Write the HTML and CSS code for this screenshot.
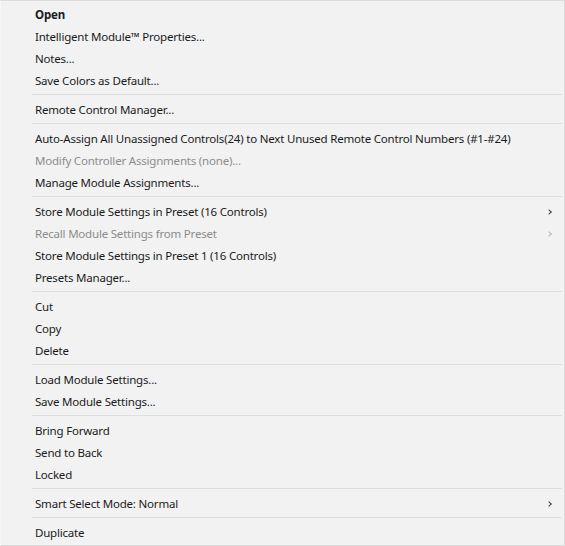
FILE: index.html
```html
<!DOCTYPE html>
<html lang="en">
<head>
    <meta charset="UTF-8">
    <title>Module Menu</title>
    <link rel="stylesheet" href="styles.css">
</head>
<body>
    <div class="menu">
        <div class="menu-item bold">Open</div>
        <div class="menu-item">Intelligent Module™ Properties...</div>
        <div class="menu-item">Notes...</div>
        <div class="menu-item">Save Colors as Default...</div>
        <div class="separator"></div>
        <div class="menu-item">Remote Control Manager...</div>
        <div class="separator"></div>
        <div class="menu-item">Auto-Assign All Unassigned Controls(24) to Next Unused Remote Control Numbers (#1-#24)</div>
        <div class="menu-item disabled">Modify Controller Assignments (none)...</div>
        <div class="menu-item">Manage Module Assignments...</div>
        <div class="separator"></div>
        <div class="menu-item submenu">Store Module Settings in Preset (16 Controls)</div>
        <div class="menu-item submenu disabled">Recall Module Settings from Preset</div>
        <div class="menu-item">Store Module Settings in Preset 1 (16 Controls)</div>
        <div class="menu-item">Presets Manager...</div>
        <div class="separator"></div>
        <div class="menu-item">Cut</div>
        <div class="menu-item">Copy</div>
        <div class="menu-item">Delete</div>
        <div class="separator"></div>
        <div class="menu-item">Load Module Settings...</div>
        <div class="menu-item">Save Module Settings...</div>
        <div class="separator"></div>
        <div class="menu-item">Bring Forward</div>
        <div class="menu-item">Send to Back</div>
        <div class="menu-item">Locked</div>
        <div class="separator"></div>
        <div class="menu-item submenu">Smart Select Mode: Normal</div>
        <div class="separator"></div>
        <div class="menu-item">Duplicate</div>
    </div>
</body>
</html>
```

FILE: styles.css
```css
:root {
    --menu-bg: #f2f2f2;
    --menu-border: #dddddd;
    --text-color: #1a1a1a;
    --disabled-color: #8c8c8c;
    --separator-color: #dedede;
}

* {
    box-sizing: border-box;
    margin: 0;
    padding: 0;
}

body, html {
    height: 100%;
    background-color: var(--menu-bg);
}

.menu {
    width: 565px;
    height: 546px;
    padding: 3px 2px 1px 0;
    background-color: var(--menu-bg);
    border: 1px solid var(--menu-border);
    border-left-color: #f6f6f6;
    font-family: 'Noto Sans', sans-serif;
    font-size: 11.5px;
    letter-spacing: -0.2px;
    color: var(--text-color);
}

.menu-item {
    position: relative;
    height: 22px;
    line-height: 22px;
    padding-left: 34px;
    white-space: nowrap;
}

.bold {
    font-weight: 700;
}

.disabled {
    color: var(--disabled-color);
}

/* little chevron for items that open a submenu */
.submenu::after {
    content: '';
    position: absolute;
    right: 11px;
    top: 9px;
    width: 3px;
    height: 3px;
    border-top: 1.5px solid #444444;
    border-right: 1.5px solid #444444;
    transform: rotate(45deg);
}

.submenu.disabled::after {
    border-color: #b8b8b8;
}

.separator {
    height: 1px;
    margin: 2px 0 4px 31px;
    background-color: var(--separator-color);
}
```
